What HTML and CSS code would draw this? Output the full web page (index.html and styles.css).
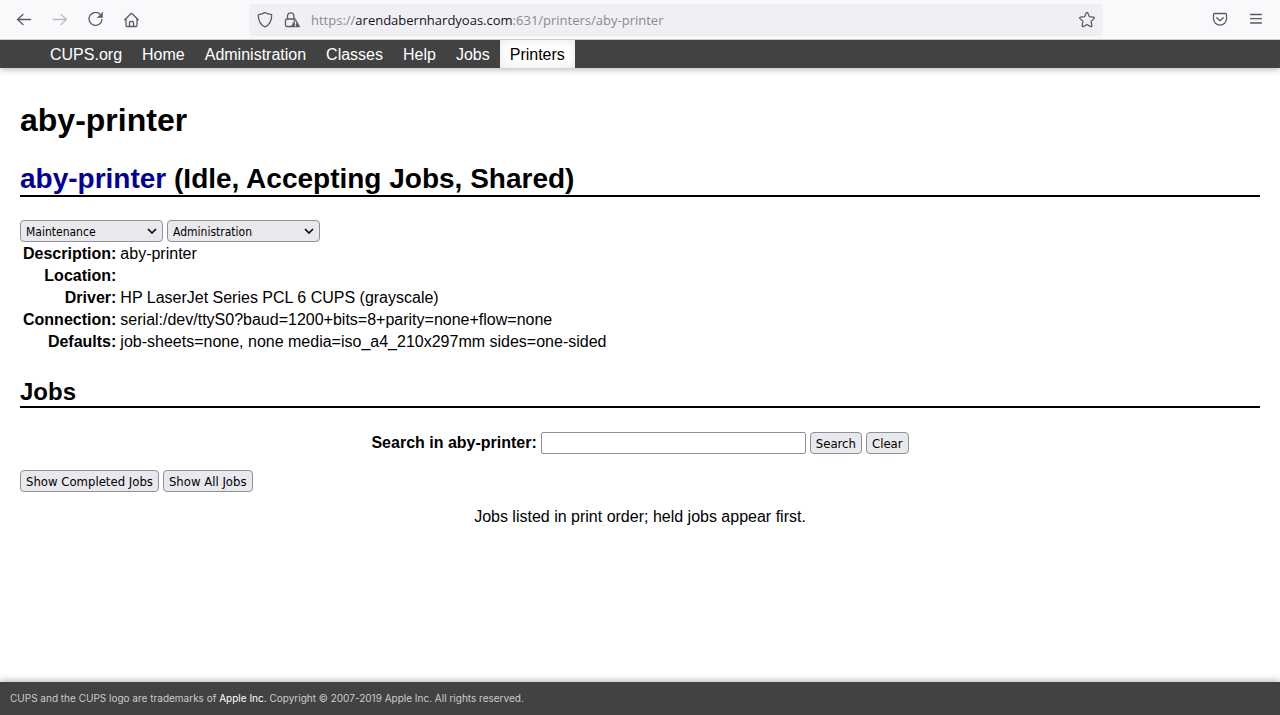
FILE: index.html
```html
<!DOCTYPE html>
<html lang="en">
<head>
<meta charset="utf-8">
<title>aby-printer - CUPS</title>
<link rel="stylesheet" href="styles.css">
</head>
<body>
<div class="toolbar">
  <div class="nav-buttons">
    <button class="icon-button" type="button" aria-label="Back"><svg viewBox="0 0 16 16"><path d="M14.500 7.500H1.500M7 2.500l-5.500 5 5.500 5"/></svg></button>
    <button class="icon-button disabled" type="button" aria-label="Forward" disabled><svg viewBox="0 0 16 16"><path d="M1 7.500h13.500M9 2.500l5.500 5-5.500 5"/></svg></button>
    <button class="icon-button" type="button" aria-label="Reload"><svg viewBox="0 0 16 16"><path d="M11.800 2A6.500 6.500 0 1 0 14 7.500"/><path class="solid" d="M14.500.5v5h-5z"/></svg></button>
    <button class="icon-button" type="button" aria-label="Home"><svg viewBox="0 0 16 16"><path d="M.8 7.800l6-6a1 1 0 0 1 1.400 0l6 6M2 6.800V13.500a1 1 0 0 0 1 1h9a1 1 0 0 0 1-1V6.800M5.500 14.500v-4a1 1 0 0 1 1-1h2a1 1 0 0 1 1 1v4"/></svg></button>
  </div>
  <div class="address-bar">
    <svg class="icon" viewBox="0 0 16 16"><path d="M8 .4c2.200 1.500 4.200 2 5.800 2 .6 0 .9.300.9.800C14.700 8.600 12.600 12.800 8 14.800 3.400 12.800 1.300 8.600 1.300 3.200c0-.5.300-.8.900-.8C3.800 2.400 5.800 1.900 8 .4z"/></svg>
    <svg class="icon" viewBox="0 0 16 16"><path d="M7 14.500H3A1.500 1.500 0 0 1 1.500 13V8.500A1.500 1.500 0 0 1 3 7h7.500M3.500 7V4a3.200 3.200 0 0 1 6.400 0v3.500"/><path class="solid" d="M11.500 7L16 15H7z"/><path class="mark" d="M11.500 9.800v2.200M11.500 13.300v.5"/></svg>
    <div class="url">https://<span class="domain">arendabernhardyoas.com</span>:631/printers/aby-printer</div>
    <button class="icon-button" type="button" aria-label="Bookmark this page"><svg viewBox="0 0 16 16"><path d="M7.200 1a.9.900 0 0 1 1.600 0l1.700 3.700 4 .5c.8.100 1 .9.500 1.400l-2.900 2.800.8 4.300c.1.700-.6 1.200-1.200.9L8 12.500l-3.700 2.100c-.6.300-1.300-.2-1.200-.9l.8-4.300L1 6.600c-.5-.5-.3-1.300.5-1.400l4-.5z"/></svg></button>
  </div>
  <div class="tool-buttons">
    <button class="icon-button" type="button" aria-label="Save to Pocket"><svg viewBox="0 0 16 16"><path d="M2.700 1.500h10.600a1.200 1.200 0 0 1 1.200 1.200v4a6.500 6.500 0 0 1-13 0v-4A1.200 1.200 0 0 1 2.700 1.500zM4.700 5.700L8 8.800l3.300-3.100"/></svg></button>
    <button class="icon-button" type="button" aria-label="Open menu"><svg viewBox="0 0 16 16"><path d="M2.500 2.500h11M2.500 6.700h11M2.500 11h11"/></svg></button>
  </div>
</div>
<nav class="site-nav">
  <a href="#">CUPS.org</a>
  <a href="#">Home</a>
  <a href="#">Administration</a>
  <a href="#">Classes</a>
  <a href="#">Help</a>
  <a href="#">Jobs</a>
  <a class="active" href="#">Printers</a>
</nav>
<main class="content">
  <h1>aby-printer</h1>
  <h2 class="title"><a href="#">aby-printer</a> (Idle, Accepting Jobs, Shared)</h2>
  <div class="actions">
    <select class="maintenance" aria-label="Maintenance"><option>Maintenance</option></select>
    <select class="administration" aria-label="Administration"><option>Administration</option></select>
  </div>
  <table class="details">
    <tr><th scope="row">Description:</th><td>aby-printer</td></tr>
    <tr><th scope="row">Location:</th><td></td></tr>
    <tr><th scope="row">Driver:</th><td>HP LaserJet Series PCL 6 CUPS (grayscale)</td></tr>
    <tr><th scope="row">Connection:</th><td>serial:/dev/ttyS0?baud=1200+bits=8+parity=none+flow=none</td></tr>
    <tr><th scope="row">Defaults:</th><td>job-sheets=none, none media=iso_a4_210x297mm sides=one-sided</td></tr>
  </table>
  <h2 class="jobs">Jobs</h2>
  <form class="search">
    <label for="query">Search in aby-printer:</label>
    <input id="query" type="text">
    <button class="button" type="submit">Search</button>
    <button class="button" type="reset">Clear</button>
  </form>
  <div class="actions">
    <button class="button" type="button">Show Completed Jobs</button>
    <button class="button" type="button">Show All Jobs</button>
  </div>
  <p class="note">Jobs listed in print order; held jobs appear first.</p>
</main>
<footer class="site-footer">CUPS and the CUPS logo are trademarks of <a href="#">Apple Inc.</a> Copyright © 2007-2019 Apple Inc. All rights reserved.</footer>
</body>
</html>
```
FILE: styles.css
```css
* { box-sizing: border-box; }

body {
  margin: 0;
  min-height: 100vh;
  display: flex;
  flex-direction: column;
  background: #fff;
  color: #000;
  font: 16px/18px "Liberation Sans", Arial, sans-serif;
}

a { text-decoration: none; }

.toolbar {
  height: 40px;
  padding: 0 16px;
  display: flex;
  align-items: center;
  background: #f9f9fb;
  border-bottom: 1px solid #ccc;
  position: relative;
  z-index: 1;
}

.nav-buttons, .tool-buttons { display: flex; gap: 20px; }
.nav-buttons { width: 233px; }
.tool-buttons { margin-left: auto; }

.icon-button {
  width: 16px;
  height: 16px;
  padding: 0;
  border: 0;
  background: none;
  color: #5b5b66;
}
.icon-button.disabled { color: #bdbdc2; }

svg {
  display: block;
  width: 16px;
  height: 16px;
  fill: none;
  stroke: currentColor;
  stroke-width: 1.3;
  stroke-linecap: round;
  stroke-linejoin: round;
}
.solid { fill: currentColor; stroke-width: 0.5; }
.mark { stroke: #f0f0f4; }

.address-bar {
  flex: 0 1 854px;
  height: 32px;
  padding: 0 8px;
  display: flex;
  align-items: center;
  gap: 11px;
  border-radius: 4px;
  background: #f0f0f4;
  color: #5b5b66;
}
.url {
  flex: 1;
  color: #8a8a90;
  font: 13px/18px "Open Sans", "Noto Sans", sans-serif;
}
.domain { color: #15141a; }

.site-nav {
  display: flex;
  padding: 0 40px;
  background: #424242;
  box-shadow: 0 2px 6px rgba(0, 0, 0, 0.25);
}
.site-nav a {
  padding: 6px 10px 4px;
  color: #fff;
}
.site-nav .active {
  background: #fff;
  color: #000;
  box-shadow: inset 0 0 10px rgba(0, 0, 0, 0.1);
}

.content { flex: 1; padding: 34px 20px 20px; }

h1, h2 { margin: 0; }
h1 { font-size: 32px; line-height: 36px; }
h2 {
  margin-bottom: 24px;
  border-bottom: 2px solid #000;
}
.title { margin: 24px 0 23px; font-size: 28px; line-height: 33px; }
.title a { color: #009; }
.jobs { margin-top: 24px; padding-bottom: 1px; font-size: 24px; line-height: 27px; }

.actions { display: flex; gap: 4px; }

select, input, .button {
  height: 22px;
  border: 1px solid #8f8f9d;
  border-radius: 4px;
  color: #000;
  font: 13px/18px "DejaVu Sans Condensed", Tahoma, "Noto Sans", sans-serif;
}
select {
  padding: 1px 5px 0;
  appearance: none;
  background: #e9e9ed url("data:image/svg+xml,%3Csvg xmlns='http://www.w3.org/2000/svg' width='10' height='6' fill='none' stroke='%23000' stroke-width='1.600'%3E%3Cpath d='M1 1l4 4 4-4'/%3E%3C/svg%3E") no-repeat right 5px center;
  font-size: 12px;
}
.maintenance { width: 143px; }
.administration { width: 153px; }
input {
  width: 265px;
  border-radius: 2px;
  background: #fff;
}
.button { padding: 1px 5px 0; background: #e9e9ed; }

.details { border-spacing: 2px; border-collapse: separate; }
.details th, .details td { padding: 1px; line-height: 18px; }
.details th { text-align: right; }

.search {
  display: flex;
  justify-content: center;
  align-items: center;
  gap: 4px;
  margin-bottom: 16px;
}
.search label { font-weight: bold; }

.note { margin: 16px 0 0; text-align: center; }

.site-footer {
  padding: 8px 10px 9px;
  background: #424242;
  box-shadow: 0 -2px 6px rgba(0, 0, 0, 0.25);
  color: #ccc;
  font: 10px/16px Inter, "Liberation Sans", sans-serif;
}
.site-footer a { color: #fff; }
```
